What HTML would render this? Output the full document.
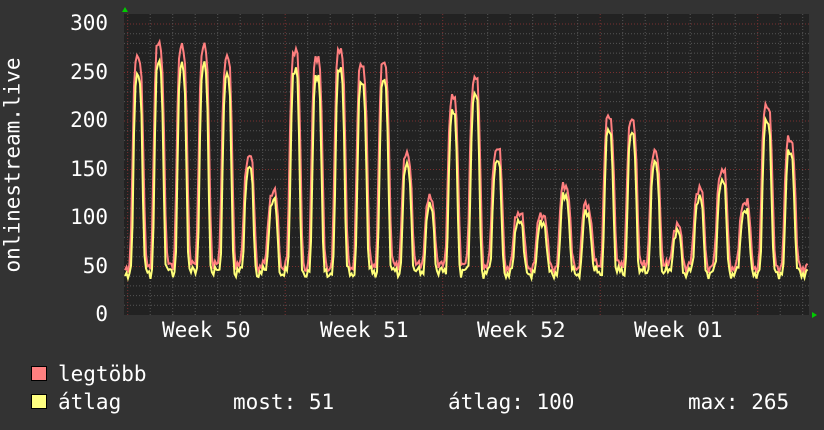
<!DOCTYPE html>
<html><head><meta charset="utf-8"><style>
html,body{margin:0;padding:0;background:#333333;}
body{width:824px;height:430px;overflow:hidden;position:relative;font-family:"DejaVu Sans Mono","Liberation Mono",monospace;color:#fff;}
.t{position:absolute;font-size:21px;white-space:pre;line-height:1;}
.yl{position:absolute;right:716px;font-size:21px;text-align:right;line-height:1;}
.sq{position:absolute;width:14px;height:13px;border:1px solid #000;}
</style></head><body>
<svg id="g" width="824" height="430" style="position:absolute;left:0;top:0"></svg>
<div class="yl" style="top:13px">300</div>
<div class="yl" style="top:62px">250</div>
<div class="yl" style="top:110px">200</div>
<div class="yl" style="top:159px">150</div>
<div class="yl" style="top:207px">100</div>
<div class="yl" style="top:256px">50</div>
<div class="yl" style="top:304px">0</div>
<div class="t" style="left:13px;top:165px;transform:translate(-50%,-50%) rotate(-90deg);">onlinestream.live</div>
<div class="t" style="left:162px;top:320px">Week 50</div>
<div class="t" style="left:320px;top:320px">Week 51</div>
<div class="t" style="left:477px;top:320px">Week 52</div>
<div class="t" style="left:634px;top:320px">Week 01</div>
<div class="sq" style="left:31px;top:366px;background:#ff8080"></div>
<div class="sq" style="left:31px;top:394px;background:#ffff80"></div>
<div class="t" style="left:58px;top:364px">legtöbb</div>
<div class="t" style="left:58px;top:392px">átlag</div>
<div class="t" style="left:233px;top:392px">most: 51</div>
<div class="t" style="left:448px;top:392px">átlag: 100</div>
<div class="t" style="left:688px;top:392px">max: 265</div>
<script>
var s='',L=124,R=809,T=14,B=315;
function Y(v){return B-v*0.97;}
s+='<rect x="'+L+'" y="'+T+'" width="'+(R-L)+'" height="'+(B-T)+'" fill="#222"/>';
for(var v=10;v<=300;v+=10){var y=Y(v);var maj=v%50==0;s+='<line x1="'+L+'" x2="'+R+'" y1="'+y+'" y2="'+y+'" stroke="'+(maj?'#7a3030':'#555')+'" stroke-dasharray="1,2"/>';}
for(var x=127.7-22.5;x<R;x+=22.5){if(x<=L)continue;var k=Math.round((x-127.7)/22.5);var maj=k%7==0;s+='<line x1="'+x+'" x2="'+x+'" y1="'+T+'" y2="'+B+'" stroke="'+(maj?'#7a3030':'#555')+'" stroke-dasharray="1,2"/>';}
var pk=[[138,268],[159,278],[182,274],[204,274],[227,263],[249,163],[273,126],[295,274],[317,268],[340,276],[362,258],[384,258],[407,163],[430,118],[453,222],[475,243],[497,172],[519,107],[542,105],[565,135],[587,113],[609,202],[632,198],[655,165],[677,90],[699,130],[722,150],[745,118],[767,218],[790,183]];
function val(x,w,sc,base){var m=base;for(var i=0;i<pk.length;i++){var d=(x-pk[i][0])/w;var p=Math.exp(-d*d*d*d);var v=base+(pk[i][1]*sc-base)*p;if(v>m)m=v;}return m;}
var r='',a='';
for(var x=L+1;x<R;x+=1.5){var n=Math.sin(x*1.7)*3+Math.sin(x*0.53)*4;
var rv=val(x,6,1,50)+n;var av=val(x,5,0.93,44)+n;
r+=x.toFixed(1)+','+Y(rv).toFixed(1)+' ';a+=x.toFixed(1)+','+Y(av).toFixed(1)+' ';}
s+='<polyline points="'+r+'" fill="none" stroke="#ff7f7f" stroke-width="2"/>';
s+='<polyline points="'+a+'" fill="none" stroke="#ffff7a" stroke-width="2"/>';
s+='<polygon points="122,12 128,12 125,7" fill="#0c0"/><polygon points="812,312 812,318 817,315" fill="#0c0"/>';
document.getElementById('g').innerHTML=s;
</script>
</body></html>
